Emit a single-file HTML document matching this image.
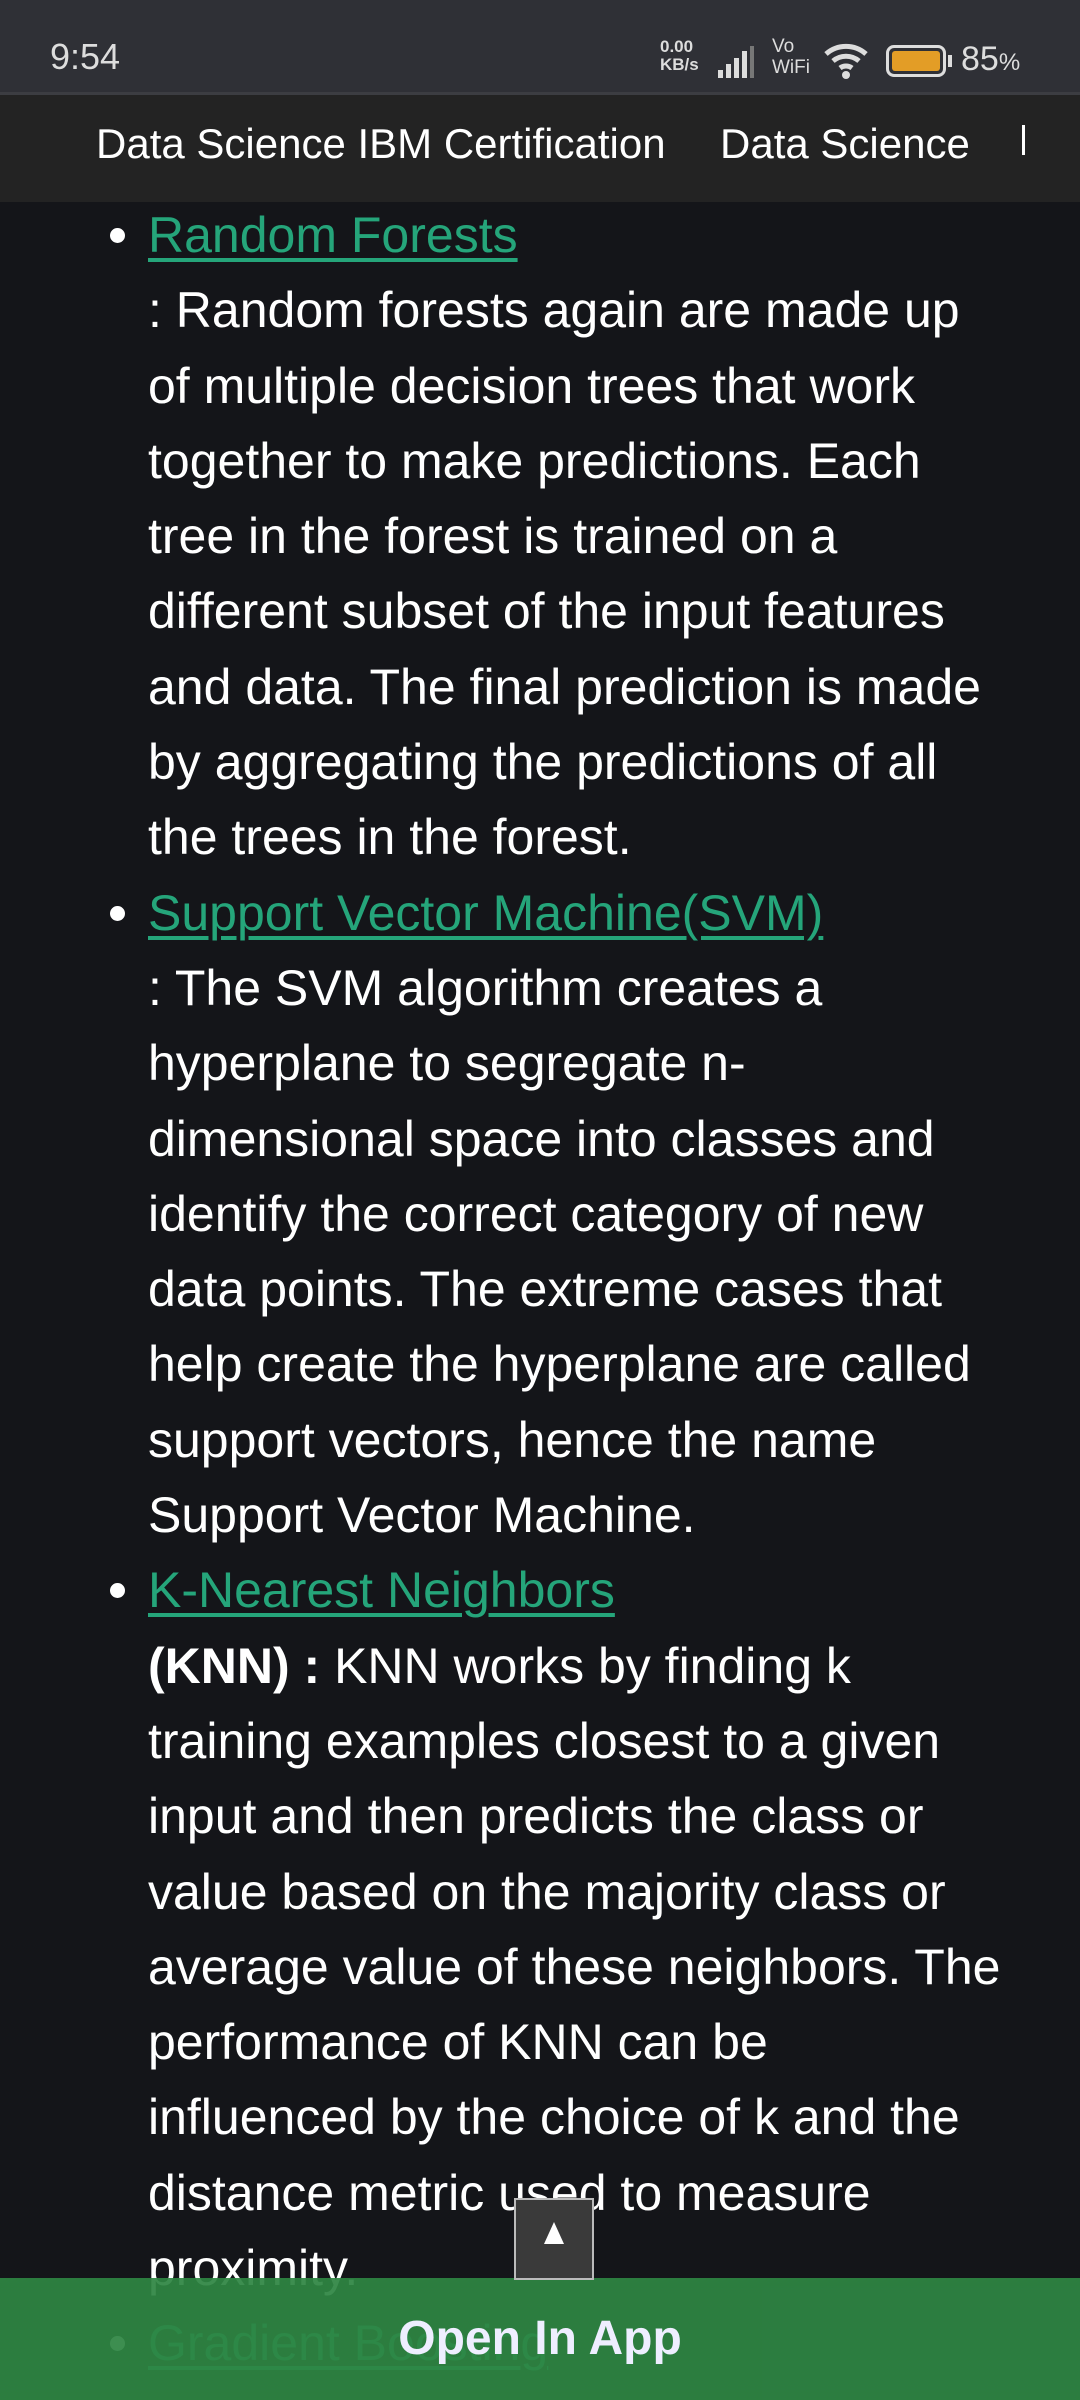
<!DOCTYPE html>
<html><head><meta charset="utf-8"><style>
*{margin:0;padding:0;box-sizing:border-box}
html,body{width:1080px;height:2400px;overflow:hidden;background:#141519;font-family:"Liberation Sans",sans-serif;color:#fff}
#sb{position:absolute;left:0;top:0;width:1080px;height:95px;background:#2f3036;z-index:5;border-bottom:3px solid #3c3d42}
#nav{position:absolute;left:0;top:95px;width:1080px;height:107px;background:#232323;z-index:5;font-size:42px;white-space:nowrap}
#content{position:absolute;left:0;top:198px;width:1080px;font-size:50px;line-height:75.3px}
.l{padding-left:148px;white-space:nowrap;position:relative}
.a{color:#25a57a;text-decoration:underline;text-decoration-thickness:4px;text-underline-offset:6px}
.a::before{content:"";position:absolute;left:110px;top:30px;width:15px;height:15px;border-radius:50%;background:#fff}
#bar{position:absolute;left:0;top:2278px;width:1080px;height:122px;background:rgba(46,133,67,0.93);z-index:6;text-align:center;font-size:48px;font-weight:bold;line-height:122px;color:#eef}
#up{position:absolute;left:514px;top:2198px;width:80px;height:82px;background:#3a3a3a;border:2px solid #bbb;z-index:7}
</style></head><body>
<div id="sb">
<div style="position:absolute;left:50px;top:36px;font-size:36px;color:#ddd">9:54</div>
<div style="position:absolute;left:660px;top:38px;font-size:17px;line-height:18px;color:#ddd;font-weight:bold">0.00<br>KB/s</div>
<svg style="position:absolute;left:716px;top:44px" width="46" height="36"><rect x="2" y="26" width="5" height="8" fill="#ddd"/><rect x="10" y="20" width="5" height="14" fill="#ddd"/><rect x="18" y="14" width="5" height="20" fill="#ddd"/><rect x="26" y="7" width="5" height="27" fill="#ddd"/><rect x="34" y="2" width="4" height="32" fill="#777"/></svg>
<div style="position:absolute;left:772px;top:36px;font-size:19px;line-height:21px;color:#ddd">Vo<br>WiFi</div>
<svg style="position:absolute;left:822px;top:40px" width="48" height="40" viewBox="0 0 48 40"><path d="M4 14 A30 30 0 0 1 44 14" stroke="#ddd" stroke-width="5" fill="none"/><path d="M11 21 A20 20 0 0 1 37 21" stroke="#ddd" stroke-width="5" fill="none"/><path d="M18 28 A10 10 0 0 1 30 28" stroke="#ddd" stroke-width="5" fill="none"/><circle cx="24" cy="35" r="4" fill="#ddd"/></svg>
<div style="position:absolute;left:886px;top:45px;width:60px;height:32px;border:3px solid #ddd;border-radius:8px;padding:3px"><div style="width:100%;height:100%;background:#e39d26;border-radius:3px"></div></div>
<div style="position:absolute;left:948px;top:55px;width:4px;height:12px;background:#ddd"></div>
<div style="position:absolute;left:961px;top:40px;font-size:34px;color:#ddd">85<span style="font-size:24px">%</span></div>
</div>
<div id="nav">
<span style="position:absolute;left:96px;top:25px">Data Science IBM Certification</span>
<span style="position:absolute;left:720px;top:25px">Data Science</span>
<span style="position:absolute;left:1022px;top:30px;width:3px;height:30px;background:#fff"></span>
</div>
<div id="content">
<div class="l"><span class="a">Random Forests</span></div>
<div class="l">: Random forests again are made up</div>
<div class="l">of multiple decision trees that work</div>
<div class="l">together to make predictions. Each</div>
<div class="l">tree in the forest is trained on a</div>
<div class="l">different subset of the input features</div>
<div class="l">and data. The final prediction is made</div>
<div class="l">by aggregating the predictions of all</div>
<div class="l">the trees in the forest.</div>
<div class="l"><span class="a">Support Vector Machine(SVM)</span></div>
<div class="l">: The SVM algorithm creates a</div>
<div class="l">hyperplane to segregate n-</div>
<div class="l">dimensional space into classes and</div>
<div class="l">identify the correct category of new</div>
<div class="l">data points. The extreme cases that</div>
<div class="l">help create the hyperplane are called</div>
<div class="l">support vectors, hence the name</div>
<div class="l">Support Vector Machine.</div>
<div class="l"><span class="a">K-Nearest Neighbors</span></div>
<div class="l"><b>(KNN) :</b> KNN works by finding k</div>
<div class="l">training examples closest to a given</div>
<div class="l">input and then predicts the class or</div>
<div class="l">value based on the majority class or</div>
<div class="l">average value of these neighbors. The</div>
<div class="l">performance of KNN can be</div>
<div class="l">influenced by the choice of k and the</div>
<div class="l">distance metric used to measure</div>
<div class="l">proximity.</div>
<div class="l"><span class="a">Gradient Boosting</span></div>
</div>
<div id="up"><svg width="76" height="78"><polygon points="38,22 28,44 48,44" fill="#fff"/></svg></div>
<div id="bar">Open In App</div>
</body></html>
